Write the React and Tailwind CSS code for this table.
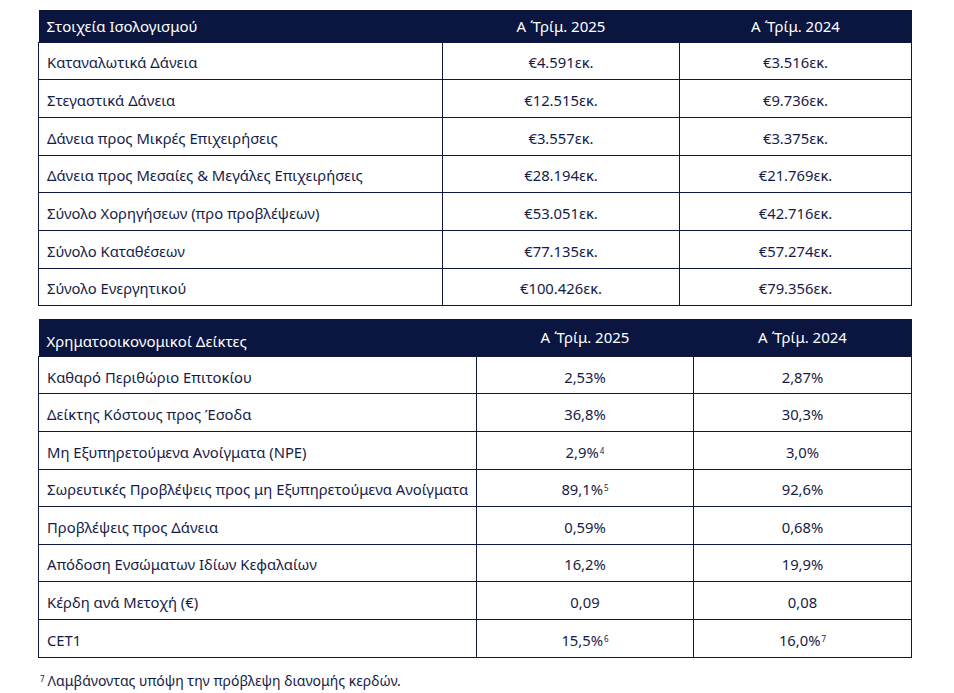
import React from "react";

const balance = [
  ["Καταναλωτικά Δάνεια", "€4.591εκ.", "€3.516εκ."],
  ["Στεγαστικά Δάνεια", "€12.515εκ.", "€9.736εκ."],
  ["Δάνεια προς Μικρές Επιχειρήσεις", "€3.557εκ.", "€3.375εκ."],
  ["Δάνεια προς Μεσαίες & Μεγάλες Επιχειρήσεις", "€28.194εκ.", "€21.769εκ."],
  ["Σύνολο Χορηγήσεων (προ προβλέψεων)", "€53.051εκ.", "€42.716εκ."],
  ["Σύνολο Καταθέσεων", "€77.135εκ.", "€57.274εκ."],
  ["Σύνολο Ενεργητικού", "€100.426εκ.", "€79.356εκ."],
];

const ratios = [
  ["Καθαρό Περιθώριο Επιτοκίου", ["2,53%"], ["2,87%"]],
  ["Δείκτης Κόστους προς Έσοδα", ["36,8%"], ["30,3%"]],
  ["Μη Εξυπηρετούμενα Ανοίγματα (NPE)", ["2,9%", "4"], ["3,0%"]],
  ["Σωρευτικές Προβλέψεις προς μη Εξυπηρετούμενα Ανοίγματα", ["89,1%", "5"], ["92,6%"]],
  ["Προβλέψεις προς Δάνεια", ["0,59%"], ["0,68%"]],
  ["Απόδοση Ενσώματων Ιδίων Κεφαλαίων", ["16,2%"], ["19,9%"]],
  ["Κέρδη ανά Μετοχή (€)", ["0,09"], ["0,08"]],
  ["CET1", ["15,5%", "6"], ["16,0%", "7"]],
];

function Val({ v }) {
  return (
    <span>
      {v[0]}
      {v[1] && <sup className="text-[8px] ml-[1px] -top-[4px]">{v[1]}</sup>}
    </span>
  );
}

export default function App() {
  return (
    <div
      className="bg-white min-h-screen pl-[38px] pt-[10px] text-[#161c48]"
      style={{ fontFamily: '"Noto Sans", Arial, sans-serif' }}
    >
      {/* BALANCE SHEET */}
      <table className="w-[873px] border-collapse table-fixed text-[14.8px]">
        <colgroup>
          <col className="w-[404px]" />
          <col className="w-[237px]" />
          <col className="w-[232px]" />
        </colgroup>
        <thead>
          <tr className="bg-[#0b1640] text-white h-[32px] text-[15px]">
            <th className="text-left font-normal pl-[8px] pt-[1px]">Στοιχεία Ισολογισμού</th>
            <th className="font-normal pt-[1px]">Α ΄Τρίμ. 2025</th>
            <th className="font-normal pt-[1px]">Α ΄Τρίμ. 2024</th>
          </tr>
        </thead>
        <tbody>
          {balance.map((r) => (
            <tr key={r[0]} className="h-[37.7px]">
              <td className="border border-[#0e1840] pl-[8px] pt-[3px]">{r[0]}</td>
              <td className="border border-[#0e1840] text-center pt-[3px]">{r[1]}</td>
              <td className="border border-[#0e1840] text-center pt-[3px]">{r[2]}</td>
            </tr>
          ))}
        </tbody>
      </table>

      {/* RATIOS */}
      <table className="w-[873px] border-collapse table-fixed text-[14.8px] mt-[13px]">
        <colgroup>
          <col className="w-[438px]" />
          <col className="w-[217px]" />
          <col className="w-[218px]" />
        </colgroup>
        <thead>
          <tr className="bg-[#0b1640] text-white h-[37px] text-[15px]">
            <th className="text-left font-normal pl-[8px] pt-[8px]">Χρηματοοικονομικοί Δείκτες</th>
            <th className="font-normal">Α ΄Τρίμ. 2025</th>
            <th className="font-normal">Α ΄Τρίμ. 2024</th>
          </tr>
        </thead>
        <tbody>
          {ratios.map((r) => (
            <tr key={r[0]} className="h-[37.6px]">
              <td className="border border-[#0e1840] pl-[8px] pt-[3px]">{r[0]}</td>
              <td className="border border-[#0e1840] text-center pt-[3px]"><Val v={r[1]} /></td>
              <td className="border border-[#0e1840] text-center pt-[3px]"><Val v={r[2]} /></td>
            </tr>
          ))}
        </tbody>
      </table>

      <p className="mt-[12px] pl-[2px] text-[14px]">
        <sup className="text-[8px] mr-[3px]">7</sup>Λαμβάνοντας υπόψη την πρόβλεψη διανομής κερδών.
      </p>
    </div>
  );
}
